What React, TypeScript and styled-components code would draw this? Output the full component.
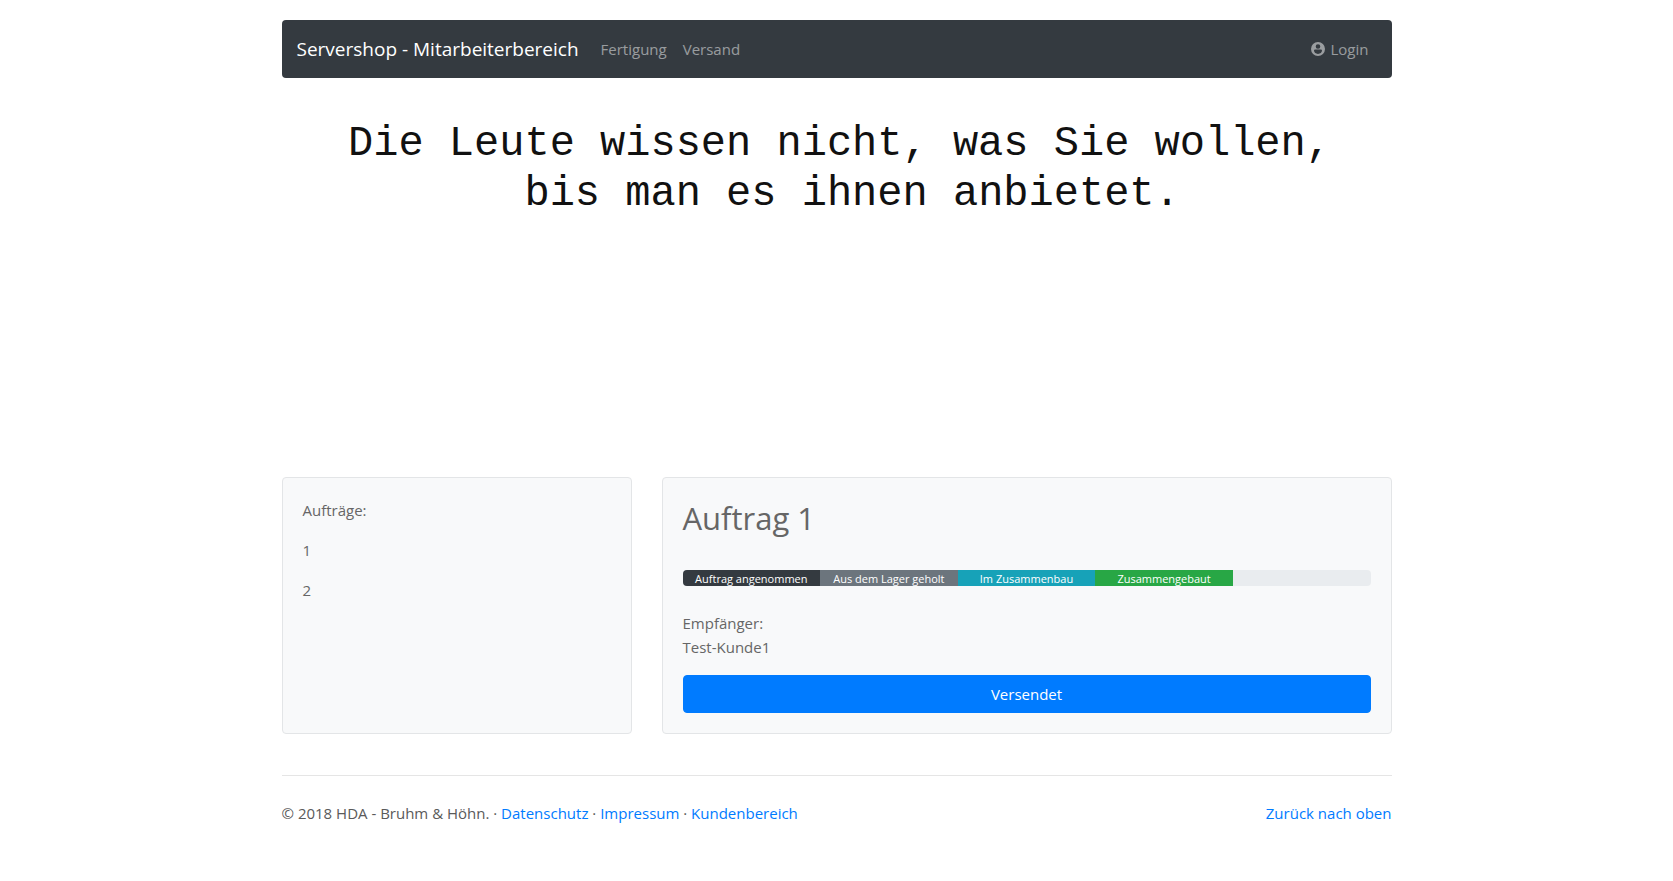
import React from "react";
import styled, { createGlobalStyle } from "styled-components";

const GlobalStyle = createGlobalStyle`
  *, *::before, *::after { box-sizing: border-box; }
  body {
    margin: 0;
    padding: 20px 0 56px;
    background: #fff;
    color: #5a5a5a;
    font-family: "Open Sans", "Noto Sans", sans-serif;
    font-size: 15px;
    line-height: 24px;
  }
`;

const Container = styled.div`
  width: 100%;
  max-width: 1140px;
  margin: 0 auto;
  padding: 0 15px;
`;

const Navbar = styled.nav`
  display: flex;
  align-items: center;
  padding: 9px 15px;
  background: #343a40;
  border-radius: 4px;
`;

const Brand = styled.a`
  margin-right: 14px;
  color: #fff;
  font-size: 19px;
  line-height: 30px;
  text-decoration: none;
  white-space: nowrap;
`;

const NavList = styled.div<{ $end?: boolean }>`
  display: flex;
  margin-left: ${(p) => (p.$end ? "auto" : "0")};
`;

const NavLink = styled.a`
  display: flex;
  align-items: center;
  gap: 6px;
  padding: 8px;
  color: rgba(255, 255, 255, 0.5);
  text-decoration: none;
`;

const Quote = styled.h1`
  margin: 41px 0 0;
  min-height: 358px;
  padding-left: 6px;
  color: #111;
  font-family: "Courier New", "Liberation Mono", monospace;
  font-size: 42px;
  font-weight: 400;
  line-height: 50px;
  text-align: center;
  white-space: pre-wrap;
`;

const Columns = styled.main`
  display: grid;
  grid-template-columns: 350fr 730fr;
  gap: 30px;
`;

const Card = styled.section`
  padding: 20px;
  background: #f8f9fa;
  border: 1px solid #e3e5e7;
  border-radius: 4px;
  color: #666;
`;

const Text = styled.p`
  margin: 0 0 16px;
`;

const Title = styled.h2`
  margin: 0 0 32px;
  font-size: 31px;
  font-weight: 400;
  line-height: 40px;
`;

const Progress = styled.div`
  display: flex;
  height: 16px;
  margin-bottom: 25px;
  overflow: hidden;
  background: #e9ecef;
  border-radius: 4px;
  font-size: 11px;
  line-height: 18px;
`;

const Step = styled.div<{ $color: string }>`
  width: 20%;
  background: ${(p) => p.$color};
  color: #fff;
  text-align: center;
  white-space: nowrap;
`;

const SubmitButton = styled.button`
  display: block;
  width: 100%;
  padding: 6px 12px;
  background: #007bff;
  border: 1px solid #007bff;
  border-radius: 4px;
  color: #fff;
  font: inherit;
  cursor: pointer;
`;

const Footer = styled.footer`
  display: flex;
  justify-content: space-between;
  margin-top: 41px;
  padding-top: 25px;
  border-top: 1px solid #e5e5e5;
`;

const Link = styled.a`
  color: #007bff;
  text-decoration: none;
`;

const steps = [
  { label: "Auftrag angenommen", color: "#343a40" },
  { label: "Aus dem Lager geholt", color: "#6c757d" },
  { label: "Im Zusammenbau", color: "#17a2b8" },
  { label: "Zusammengebaut", color: "#28a745" },
];

const UserIcon = () => (
  <svg width="14" height="14" viewBox="0 0 14 14" fill="currentColor" fillRule="evenodd" aria-hidden="true">
    <path d="M7 0a7 7 0 1 1 0 14A7 7 0 0 1 7 0zM7 2.2a2.3 2.3 0 1 0 0 4.6 2.3 2.3 0 0 0 0-4.6zM3 8.6c0 2 1.700 3.300 4 3.300s4-1.300 4-3.300c0-.7-.7-1-1.400-1H4.400C3.700 7.600 3 7.900 3 8.600z" />
  </svg>
);

export default function App() {
  return (
    <Container id="top">
      <GlobalStyle />
      <Navbar>
        <Brand href="#">Servershop - Mitarbeiterbereich</Brand>
        <NavList>
          <NavLink href="#">Fertigung</NavLink>
          <NavLink href="#">Versand</NavLink>
        </NavList>
        <NavList $end>
          <NavLink href="#">
            <UserIcon />
            Login
          </NavLink>
        </NavList>
      </Navbar>
      <Quote>{"Die Leute wissen nicht, was Sie wollen,\n bis man es ihnen anbietet."}</Quote>
      <Columns>
        <Card>
          <Text>Aufträge:</Text>
          <Text>1</Text>
          <Text>2</Text>
        </Card>
        <Card>
          <Title>Auftrag 1</Title>
          <Progress>
            {steps.map((s) => (
              <Step key={s.label} $color={s.color}>
                {s.label}
              </Step>
            ))}
          </Progress>
          <Text>
            Empfänger:
            <br />
            Test-Kunde1
          </Text>
          <SubmitButton type="button">Versendet</SubmitButton>
        </Card>
      </Columns>
      <Footer>
        <span>
          © 2018 HDA - Bruhm &amp; Höhn. · <Link href="#">Datenschutz</Link> ·{" "}
          <Link href="#">Impressum</Link> · <Link href="#">Kundenbereich</Link>
        </span>
        <Link href="#top">Zurück nach oben</Link>
      </Footer>
    </Container>
  );
}
